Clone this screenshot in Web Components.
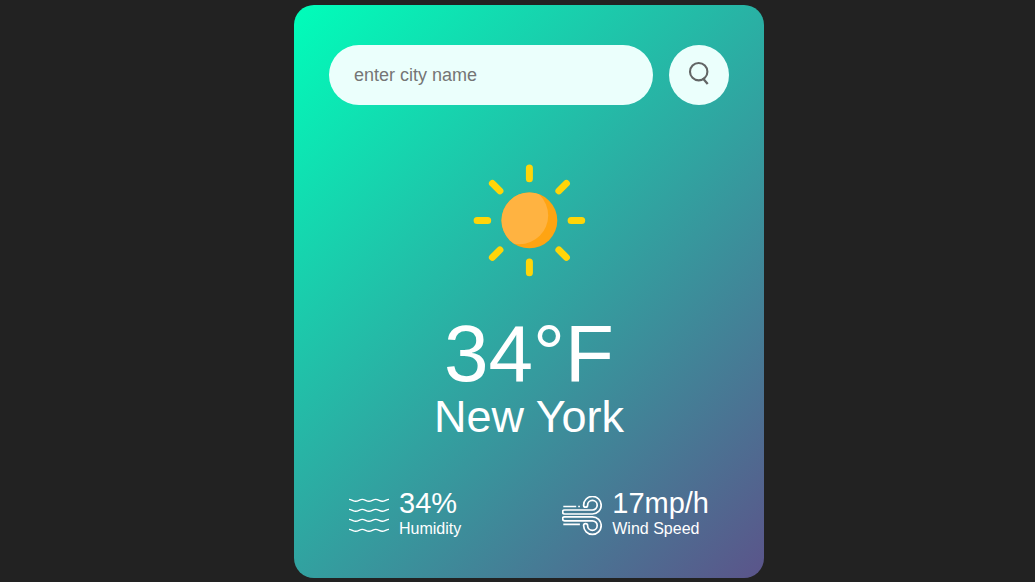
<!DOCTYPE html>
<html lang="en">
<head>
<meta charset="utf-8">
<meta name="viewport" content="width=device-width, initial-scale=1">
<title>Weather</title>
<style>
  body { margin: 0; padding: 5px 0 4px 23px; background: #222; color: #fff; font-family: "Liberation Sans", Arial, sans-serif; }
</style>
</head>
<body>
<weather-card>
  <city-search slot="search"></city-search>
  <sun-icon slot="icon"></sun-icon>
  <span slot="temperature">34°F</span>
  <span slot="city">New York</span>
  <weather-detail slot="details"><humidity-icon slot="icon"></humidity-icon><span slot="value">34%</span>Humidity</weather-detail>
  <weather-detail slot="details"><wind-icon slot="icon"></wind-icon><span slot="value">17mp/h</span>Wind Speed</weather-detail>
</weather-card>
<script>
  function define(name, html, setup) {
    customElements.define(name, class extends HTMLElement {
      constructor() {
        super();
        this.attachShadow({ mode: "open" }).innerHTML = html;
        if (setup) setup(this.shadowRoot);
      }
    });
  }

  define("city-search", `
    <style>
      :host { display: block; }
      form { display: flex; gap: 16px; margin: 0; }
      input { flex: 1; min-width: 0; height: 60px; box-sizing: border-box; padding: 10px 25px; border: 0; outline: 0; border-radius: 30px; background: #ebfffc; color: #555; font: 18px "Liberation Sans", Arial, sans-serif; }
      input::placeholder { color: #757575; }
      button { display: flex; align-items: center; justify-content: center; width: 60px; height: 60px; padding: 0 0 4px; border: 0; border-radius: 50%; background: #ebfffc; cursor: pointer; }
    </style>
    <form>
      <input type="text" placeholder="enter city name" aria-label="City name" spellcheck="false">
      <button type="submit" aria-label="Search">
        <svg width="22" height="24" viewBox="0 0 22 24" fill="none" stroke="#626565" stroke-width="2.1">
          <circle cx="10.7" cy="10.7" r="8.7"/><path d="M14.8 17.2l4.9 5.8" stroke-width="2.3"/>
        </svg>
      </button>
    </form>`, root => root.querySelector("form").addEventListener("submit", e => e.preventDefault()));

  define("sun-icon", `
    <style>:host { display: block; } svg { display: block; margin: auto; }</style>
    <svg width="170" height="170" viewBox="-85.4 -85.4 170 170" aria-hidden="true">
      <defs><clipPath id="disc"><circle r="27.9"/></clipPath></defs>
      <g stroke="#ffd508" stroke-width="7" stroke-linecap="round">
        <path d="M0-52.3V-41.7M0 52.3V41.7M-52.3 0H-41.7M52.3 0H41.7M-37-37l7.5 7.5M37-37l-7.5 7.5M-37 37l7.5-7.5M37 37l-7.5-7.5"/>
      </g>
      <circle r="27.9" fill="#ffa412"/>
      <circle cx="-10" cy="-5" r="28.8" fill="#ffb341" clip-path="url(#disc)"/>
    </svg>`);

  define("humidity-icon", `
    <style>:host { display: block; } svg { display: block; }</style>
    <svg width="40" height="40" viewBox="0 0 40 40" fill="none" stroke="#fff" stroke-width="1.4" aria-hidden="true">
      <defs><path id="wave" d="M0-.9C2.6-.9 4 .9 6.7 .9S10.7-.9 13.3-.9 17.3 .9 20 .9 24-.9 26.7-.9 30.7 .9 33.3 .9 37.4-.9 40-.9"/></defs>
      <g transform="translate(0 -.7)"><use href="#wave" y="5"/><use href="#wave" y="15"/><use href="#wave" y="25"/><use href="#wave" y="35"/></g>
    </svg>`);

  define("wind-icon", `
    <style>:host { display: block; } svg { display: block; }</style>
    <svg width="40" height="40" viewBox="0 .6 40 40" fill="none" stroke="#fff" stroke-width="1.7" aria-hidden="true">
      <defs><path id="gust" d="M2.6 14.6H30.4A4.8 4.8 0 1 0 25.6 9.8A2 2 0 0 1 21.6 9.8A8.8 8.8 0 1 1 30.4 18.6H2.6A2 2 0 0 1 2.6 14.6Z"/></defs>
      <use href="#gust"/><use href="#gust" transform="translate(0 40) scale(1 -1)"/>
      <path d="M1.3 11.1H14.2M16.2 11.1h1.7M1.3 28.9H17.9"/>
    </svg>`);

  define("weather-detail", `
    <style>
      :host { display: flex; align-items: center; gap: 10px; }
      .value { font-size: 29px; line-height: 33px; margin: -6px 0 0; }
      .label { font-size: 16px; line-height: 18px; margin: 0; }
    </style>
    <slot name="icon"></slot>
    <div><p class="value"><slot name="value"></slot></p><p class="label"><slot></slot></p></div>`);

  define("weather-card", `
    <style>
      :host { display: block; box-sizing: border-box; width: 90%; max-width: 470px; margin: 0 auto; padding: 40px 35px; border-radius: 20px; background: linear-gradient(135deg, #00feba, #5b548a); text-align: center; }
      .weather { margin-top: 30px; }
      h1 { margin: 9px 0 0; font-size: 80px; line-height: 80px; font-weight: 400; }
      h2 { margin: 0; font-size: 45px; line-height: 46px; font-weight: 400; }
      .details { display: flex; justify-content: space-between; margin-top: 53px; padding: 0 20px; text-align: left; }
    </style>
    <slot name="search"></slot>
    <div class="weather">
      <slot name="icon"></slot>
      <h1><slot name="temperature"></slot></h1>
      <h2><slot name="city"></slot></h2>
    </div>
    <div class="details"><slot name="details"></slot></div>`);
</script>
</body>
</html>
